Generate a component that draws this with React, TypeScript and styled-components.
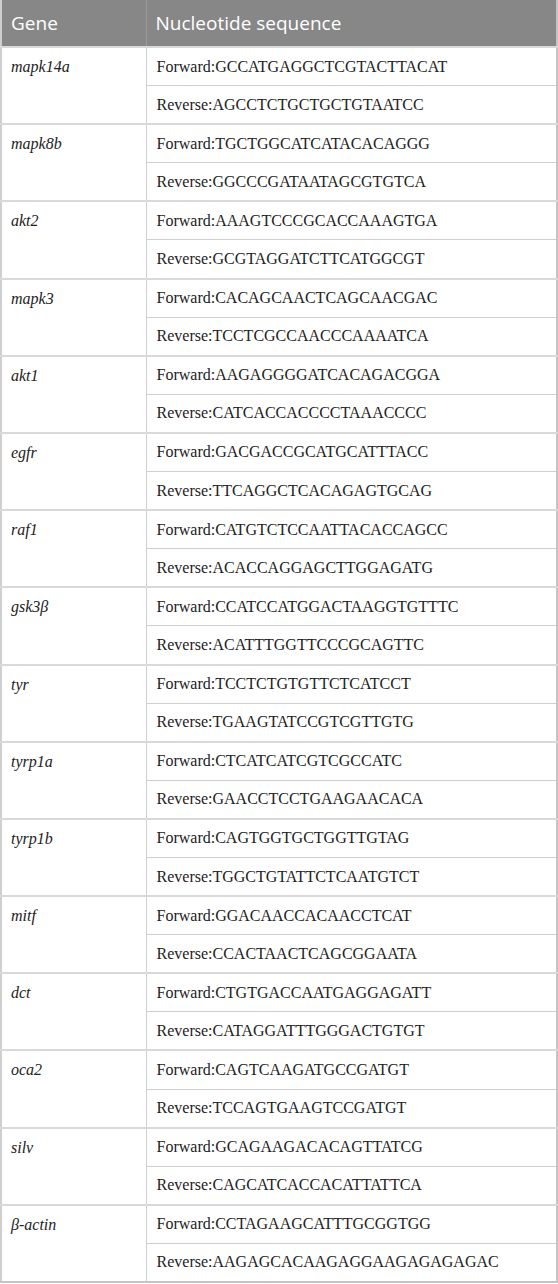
import React from "react";
import styled, { createGlobalStyle } from "styled-components";

const Global = createGlobalStyle`
  html, body { margin: 0; padding: 0; background: #ffffff; }
`;

const rows: [string, string, string][] = [
  ["mapk14a", "GCCATGAGGCTCGTACTTACAT", "AGCCTCTGCTGCTGTAATCC"],
  ["mapk8b", "TGCTGGCATCATACACAGGG", "GGCCCGATAATAGCGTGTCA"],
  ["akt2", "AAAGTCCCGCACCAAAGTGA", "GCGTAGGATCTTCATGGCGT"],
  ["mapk3", "CACAGCAACTCAGCAACGAC", "TCCTCGCCAACCCAAAATCA"],
  ["akt1", "AAGAGGGGATCACAGACGGA", "CATCACCACCCCTAAACCCC"],
  ["egfr", "GACGACCGCATGCATTTACC", "TTCAGGCTCACAGAGTGCAG"],
  ["raf1", "CATGTCTCCAATTACACCAGCC", "ACACCAGGAGCTTGGAGATG"],
  ["gsk3β", "CCATCCATGGACTAAGGTGTTTC", "ACATTTGGTTCCCGCAGTTC"],
  ["tyr", "TCCTCTGTGTTCTCATCCT", "TGAAGTATCCGTCGTTGTG"],
  ["tyrp1a", "CTCATCATCGTCGCCATC", "GAACCTCCTGAAGAACACA"],
  ["tyrp1b", "CAGTGGTGCTGGTTGTAG", "TGGCTGTATTCTCAATGTCT"],
  ["mitf", "GGACAACCACAACCTCAT", "CCACTAACTCAGCGGAATA"],
  ["dct", "CTGTGACCAATGAGGAGATT", "CATAGGATTTGGGACTGTGT"],
  ["oca2", "CAGTCAAGATGCCGATGT", "TCCAGTGAAGTCCGATGT"],
  ["silv", "GCAGAAGACACAGTTATCG", "CAGCATCACCACATTATTCA"],
  ["β-actin", "CCTAGAAGCATTTGCGGTGG", "AAGAGCACAAGAGGAAGAGAGAGAC"],
];

const Table = styled.table`
  width: 558px;
  border-collapse: collapse;
  border-left: 2px solid #cfcfcf;
  border-right: 2px solid #c4c4c4;
  border-bottom: 2px solid #c4c4c4;
  table-layout: fixed;
`;

const HeadCell = styled.th<{ $w?: number }>`
  background: #878787;
  color: #ffffff;
  font-family: "Open Sans", "Noto Sans", sans-serif;
  font-weight: 400;
  font-size: 19px;
  text-align: left;
  height: 47px;
  padding: 0 0 1px 9px;
  box-sizing: border-box;
  width: ${(p) => (p.$w ? `${p.$w}px` : "auto")};
  border-right: 1px solid #9a9a9a;
  &:last-child { border-right: none; }
`;

const GeneCell = styled.td`
  font-family: "Liberation Serif", "DejaVu Serif", serif;
  font-style: italic;
  font-size: 16px;
  color: #222;
  vertical-align: top;
  padding: 10px 0 0 9px;
  border-right: 1px solid #cfcfcf;
  border-top: 2px solid #d9d9d9;
`;

const SeqCell = styled.td<{ $first?: boolean }>`
  font-family: "Liberation Serif", "DejaVu Serif", serif;
  font-size: 16px;
  color: #222;
  height: 38.6px;
  padding: 0 0 0 10px;
  box-sizing: border-box;
  vertical-align: middle;
  border-top: ${(p) => (p.$first ? "2px solid #d9d9d9" : "1px solid #cfcfcf")};
`;

export default function App() {
  return (
    <>
      <Global />
      <Table>
        <thead>
          <tr>
            <HeadCell $w={145}>Gene</HeadCell>
            <HeadCell>Nucleotide sequence</HeadCell>
          </tr>
        </thead>
        <tbody>
          {rows.map(([g, f, r]) => (
            <React.Fragment key={g}>
              <tr>
                <GeneCell rowSpan={2}>{g}</GeneCell>
                <SeqCell $first>Forward:{f}</SeqCell>
              </tr>
              <tr>
                <SeqCell>Reverse:{r}</SeqCell>
              </tr>
            </React.Fragment>
          ))}
        </tbody>
      </Table>
    </>
  );
}
